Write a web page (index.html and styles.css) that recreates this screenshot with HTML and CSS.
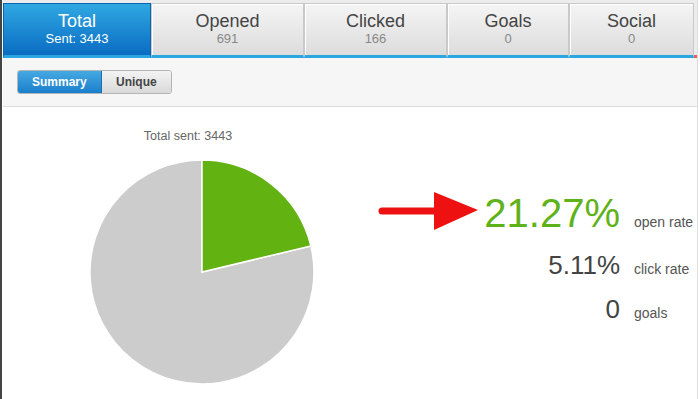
FILE: index.html
```html
<!DOCTYPE html>
<html>

<head>
    <title>Campaign report</title>
    <link rel="stylesheet" href="styles.css">
</head>

<body>
    <div id="page">
        <div class="tabs">
            <div class="tab active">
                <div class="tab-title">Total</div>
                <div class="tab-count">Sent: 3443</div>
            </div>
            <div class="tab">
                <div class="tab-title">Opened</div>
                <div class="tab-count">691</div>
            </div>
            <div class="tab">
                <div class="tab-title">Clicked</div>
                <div class="tab-count">166</div>
            </div>
            <div class="tab">
                <div class="tab-title">Goals</div>
                <div class="tab-count">0</div>
            </div>
            <div class="tab">
                <div class="tab-title">Social</div>
                <div class="tab-count">0</div>
            </div>
            <div class="tab-rest"></div>
        </div>
        <div class="toolbar">
            <div class="switch">
                <div class="switch-btn on">Summary</div>
                <div class="switch-btn">Unique</div>
            </div>
        </div>
        <div class="report">
            <div class="chart">
                <div class="chart-title">Total sent: 3443</div>
                <svg class="pie" width="224" height="224" viewBox="0 0 224 224">
                    <path d="M112 112 L220.9 86 A112 112 0 1 1 112 0 Z" fill="#cccccc" stroke="#ffffff" stroke-width="1.5" />
                    <path d="M112 112 L112 0 A112 112 0 0 1 220.9 86 Z" fill="#62b212" stroke="#ffffff" stroke-width="1.5" />
                </svg>
            </div>
            <div class="stats">
                <svg class="arrow" width="100" height="40" viewBox="0 0 100 40">
                    <line x1="4" y1="19" x2="60" y2="19" stroke="#ee1111" stroke-width="7" stroke-linecap="round" />
                    <polygon points="56,0 100,18 56,38" fill="#ee1111" />
                </svg>
                <div class="num big">21.27%</div>
                <div class="label">open rate</div>

                <div></div>
                <div class="num">5.11%</div>
                <div class="label">click rate</div>

                <div></div>
                <div class="num">0</div>
                <div class="label">goals</div>
            </div>
        </div>
    </div>
</body>

</html>
```

FILE: styles.css
```css
body {
    margin: 0;
    background-color: #ffffff;
    font-family: "Liberation Sans", Arial, sans-serif;
}

#page {
    width: 694px;
    height: 399px;
    border-left: 2px solid #444;
    border-right: 1px solid #ddd;
    padding-left: 1px;
    background-color: white;
    overflow: hidden;
}

.tabs {
    display: grid;
    grid-template-columns: 148px 153px 143px 122px 125px 1fr;
    padding-top: 3px;
    background-color: #ececec;
}

.tab {
    height: 55px;
    box-sizing: border-box;
    padding-top: 7px;
    border: 1px solid #c9c9c9;
    border-bottom: 3px solid #2aa6e0;
    box-shadow: inset 1px 1px 0 #fff;
    background: linear-gradient(#f5f5f5, #dcdcdc);
    text-align: center;
}

.tab.active {
    background: linear-gradient(#2fa8e2, #0a6cc3);
    border-color: #0b64b0;
    border-bottom-color: #2aa6e0;
    box-shadow: none;
}

.tab-rest {
    border-bottom: 3px solid #ef5a5a;
}

.tab-title {
    font-size: 18px;
    line-height: 20px;
    color: #444;
}

.tab-count {
    font-size: 13px;
    line-height: 15px;
    color: #888;
}

.tab.active .tab-title,
.tab.active .tab-count {
    color: white;
}

.toolbar {
    height: 49px;
    box-sizing: border-box;
    padding: 12px 0 0 14px;
    background-color: #f6f6f6;
    border-bottom: 1px solid #dddddd;
}

.switch {
    display: flex;
    width: fit-content;
    border: 1px solid #b4b4b4;
    border-radius: 3px;
    overflow: hidden;
}

.switch-btn {
    font-size: 12px;
    font-weight: bold;
    line-height: 22px;
    color: #444;
    padding: 0 14px;
    background: linear-gradient(#f3f3f3, #d9d9d9);
}

.switch-btn.on {
    color: white;
    width: 55px;
    background: linear-gradient(#45a9e2, #1a7fcb);
    border-right: 1px solid #1a6fb0;
}

.report {
    display: flex;
    align-items: flex-start;
}

.chart {
    width: 288px;
    padding: 22px 0 0 87px;
}

.chart-title {
    width: 196px;
    font-size: 12.5px;
    line-height: 15px;
    color: #666;
    text-align: center;
}

.pie {
    display: block;
    margin-top: 16px;
}

.stats {
    display: grid;
    grid-template-columns: 100px 142px auto;
    align-items: baseline;
    row-gap: 19px;
    margin-top: 86px;
}

.arrow {
    align-self: start;
    margin-top: -1px;
}

.num {
    font-size: 26px;
    line-height: 25px;
    color: #444;
    text-align: right;
}

.num.big {
    font-size: 40px;
    line-height: 41px;
    color: #5fb31a;
}

.label {
    font-size: 14px;
    line-height: 14px;
    color: #555;
    padding-left: 14px;
}
```
